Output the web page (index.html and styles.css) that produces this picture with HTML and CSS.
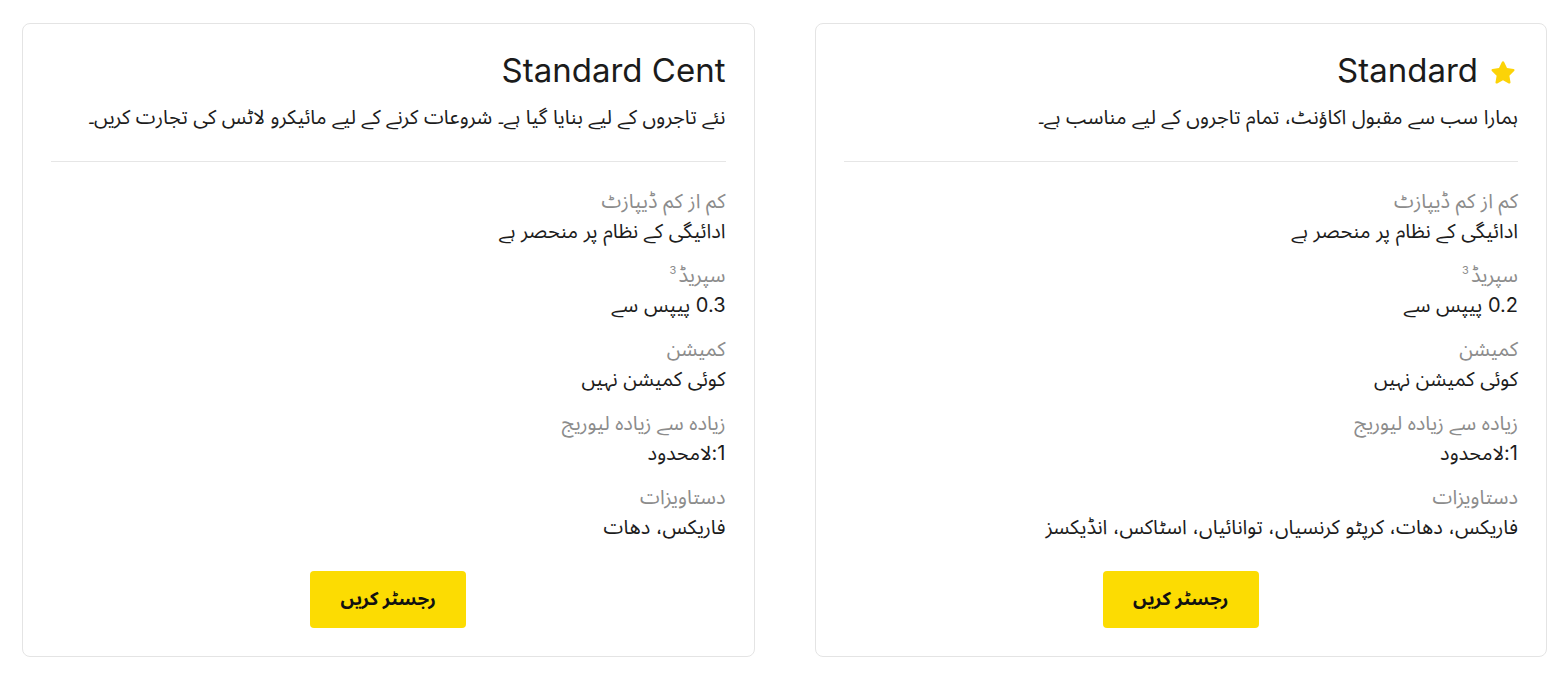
FILE: index.html
```html
<!DOCTYPE html>
<html lang="ur" dir="rtl">
<head>
  <meta charset="UTF-8">
  <title>اکاؤنٹس</title>
  <meta name="viewport" content="width=device-width, initial-scale=1.0">
  <link rel="stylesheet" href="styles.css">
</head>
<body>
  <main class="plans">
    <!-- Standard account -->
    <section class="plan">
      <h2 class="plan-title">
        <svg class="star" viewBox="0 0 24 24" aria-hidden="true">
          <path d="M12 2.6c.4 0 .7.2.9.6l2.3 4.7 5.2.8c.8.1 1.1 1.1.5 1.7l-3.8 3.7.9 5.2c.1.8-.7 1.4-1.4 1l-4.6-2.5-4.6 2.5c-.7.4-1.6-.2-1.4-1l.9-5.2L3.1 10.4c-.6-.6-.3-1.6.5-1.7l5.2-.8 2.3-4.7c.2-.4.5-.6.9-.6z"/>
        </svg>
        <span dir="ltr">Standard</span>
      </h2>
      <p class="plan-desc">ہمارا سب سے مقبول اکاؤنٹ، تمام تاجروں کے لیے مناسب ہے۔</p>
      <dl class="specs">
        <div class="spec">
          <dt>کم از کم ڈیپازٹ</dt>
          <dd>ادائیگی کے نظام پر منحصر ہے</dd>
        </div>
        <div class="spec">
          <dt>سپریڈ<sup>3</sup></dt>
          <dd>0.2 پیپس سے</dd>
        </div>
        <div class="spec">
          <dt>کمیشن</dt>
          <dd>کوئی کمیشن نہیں</dd>
        </div>
        <div class="spec">
          <dt>زیادہ سے زیادہ لیوریج</dt>
          <dd>1:لامحدود</dd>
        </div>
        <div class="spec">
          <dt>دستاویزات</dt>
          <dd>فاریکس، دھات، کرپٹو کرنسیاں، توانائیاں، اسٹاکس، انڈیکسز</dd>
        </div>
      </dl>
      <a class="btn" href="#">رجسٹر کریں</a>
    </section>

    <!-- Standard Cent account -->
    <section class="plan">
      <h2 class="plan-title">
        <span dir="ltr">Standard Cent</span>
      </h2>
      <p class="plan-desc">نئے تاجروں کے لیے بنایا گیا ہے۔ شروعات کرنے کے لیے مائیکرو لاٹس کی تجارت کریں۔</p>
      <dl class="specs">
        <div class="spec">
          <dt>کم از کم ڈیپازٹ</dt>
          <dd>ادائیگی کے نظام پر منحصر ہے</dd>
        </div>
        <div class="spec">
          <dt>سپریڈ<sup>3</sup></dt>
          <dd>0.3 پیپس سے</dd>
        </div>
        <div class="spec">
          <dt>کمیشن</dt>
          <dd>کوئی کمیشن نہیں</dd>
        </div>
        <div class="spec">
          <dt>زیادہ سے زیادہ لیوریج</dt>
          <dd>1:لامحدود</dd>
        </div>
        <div class="spec">
          <dt>دستاویزات</dt>
          <dd>فاریکس، دھات</dd>
        </div>
      </dl>
      <a class="btn" href="#">رجسٹر کریں</a>
    </section>
  </main>
</body>
</html>
```

FILE: styles.css
```css
*,
*::before,
*::after {
  box-sizing: border-box;
}
body {
  margin: 0;
  background: #fff;
  color: #1c1c1c;
  font-family: Inter, "Noto Sans Arabic", "Noto Naskh Arabic", "DejaVu Sans", sans-serif;
}
.plans {
  display: grid;
  grid-template-columns: 1fr 1fr;
  gap: 60px;
  padding: 23px 21px 0 22px;
}
.plan {
  display: flex;
  flex-direction: column;
  border: 1px solid #e4e4e4;
  border-radius: 8px;
  padding: 25px 28px 28px;
  min-height: 634px;
}
.plan-title {
  display: flex;
  align-items: center;
  gap: 10px;
  margin: 0;
  font-size: 33px;
  font-weight: 400;
  line-height: 42px;
  color: #1b1b1b;
}
.star {
  width: 30px;
  height: 30px;
  fill: #fcd307;
  margin-top: 6px;
}
.plan-desc {
  margin: 11px 0 0;
  font-size: 20px;
  line-height: 30px;
  padding-bottom: 29px;
  border-bottom: 1px solid #e6e6e6;
}
.specs {
  display: flex;
  flex-direction: column;
  gap: 14px;
  margin: 24px 0 0;
}
.spec dt,
.spec dd {
  margin: 0;
  font-size: 20px;
  line-height: 30px;
}
.spec dt {
  color: #8c8c8c;
}
.spec dd {
  color: #1c1c1c;
}
.spec sup {
  font-size: 11px;
  line-height: 0;
  margin-right: 2px;
}
.btn {
  align-self: center;
  margin-top: auto;
  width: 156px;
  height: 57px;
  display: flex;
  align-items: center;
  justify-content: center;
  background: #fcdc02;
  border-radius: 4px;
  color: #111;
  font-size: 18.5px;
  font-weight: 700;
  text-decoration: none;
}
```
